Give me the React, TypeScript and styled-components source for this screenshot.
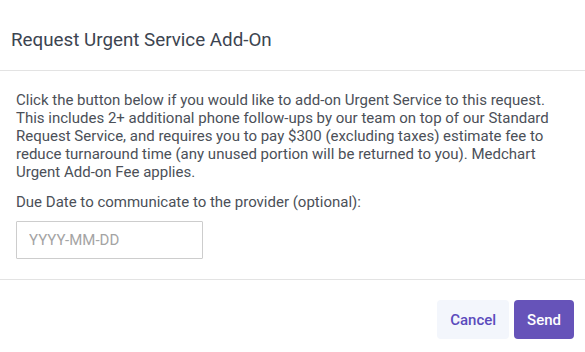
import React from 'react';
import styled, { createGlobalStyle } from 'styled-components';

const GlobalStyle = createGlobalStyle`
    html, body {
        margin: 0;
        padding: 0;
        background: #ffffff;
    }

    body {
        font-family: Roboto, 'Noto Sans', Arial, sans-serif;
        -webkit-font-smoothing: antialiased;
    }
`;

const Modal = styled.div`
    width: 585px;
    height: 352px;
    display: flex;
    flex-direction: column;
    background: #ffffff;
    overflow: hidden;
`;

const Header = styled.div`
    padding: 28px 16px 18px 11px;
    border-bottom: 1px solid #e3e3e3;
`;

const Title = styled.h2`
    margin: 0;
    font-size: 18.8px;
    line-height: 24px;
    font-weight: 400;
    color: #3c4450;
`;

const Body = styled.div`
    display: flex;
    flex-direction: column;
    align-items: flex-start;
    padding: 20px 16px 20px;
    border-bottom: 1px solid #e3e3e3;
`;

const Description = styled.p`
    margin: 0 0 12px;
    font-size: 15px;
    line-height: 18px;
    color: #4b5058;
`;

const Label = styled.label`
    font-size: 15px;
    line-height: 18px;
    color: #4b5058;
    margin-bottom: 10px;
`;

const DateInput = styled.input`
    box-sizing: border-box;
    width: 187px;
    height: 38px;
    padding: 0 12px;
    border: 1px solid #cdcdcd;
    border-radius: 1px;
    font-family: inherit;
    font-size: 15px;
    color: #4b5058;
    outline: none;

    &::placeholder {
        color: #a4a4a4;
    }
`;

const Footer = styled.div`
    display: flex;
    justify-content: flex-end;
    gap: 5px;
    padding: 20px 11px 0;
`;

const Button = styled.button<{ $primary?: boolean }>`
    height: 39px;
    padding: 0 13px;
    border: none;
    border-radius: 4px;
    font-family: inherit;
    font-size: 15px;
    font-weight: 500;
    cursor: pointer;
    background: ${(p) => (p.$primary ? '#6653b9' : '#f3f6fc')};
    color: ${(p) => (p.$primary ? '#ffffff' : '#5b4bbd')};
`;

export default function App() {
    return (
        <>
            <GlobalStyle />
            <Modal>
                <Header>
                    <Title>Request Urgent Service Add-On</Title>
                </Header>
                <Body>
                    <Description>
                        Click the button below if you would like to add-on Urgent Service to this request.
                        This includes 2+ additional phone follow-ups by our team on top of our Standard
                        Request Service, and requires you to pay $300 (excluding taxes) estimate fee to
                        reduce turnaround time (any unused portion will be returned to you). Medchart
                        Urgent Add-on Fee applies.
                    </Description>
                    <Label htmlFor="due-date">Due Date to communicate to the provider (optional):</Label>
                    <DateInput id="due-date" placeholder="YYYY-MM-DD" />
                </Body>
                <Footer>
                    <Button>Cancel</Button>
                    <Button $primary>Send</Button>
                </Footer>
            </Modal>
        </>
    );
}
